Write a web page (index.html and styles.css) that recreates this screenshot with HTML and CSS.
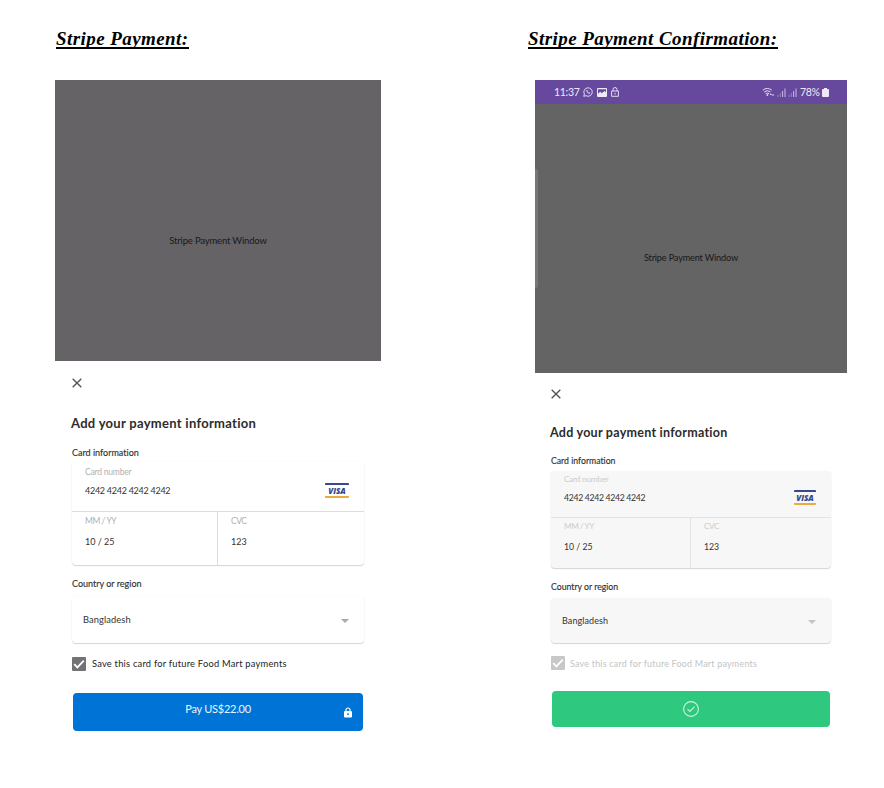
FILE: index.html
```html
<!DOCTYPE html>
<html lang="en">
<head>
<meta charset="utf-8">
<title>Stripe Payment</title>
<link rel="stylesheet" href="styles.css">
</head>
<body>
<main class="page">
  <section class="column pay">
    <h1><span>Stripe Payment:</span></h1>
    <div class="phone">
      <div class="backdrop"><span class="window">Stripe Payment Window</span></div>
      <div class="sheet">
        <div class="close"><svg viewBox="0 0 10 10"><path d="M.7.7l8.6 8.6M9.3.7L.7 9.3"/></svg></div>
        <h2><span>Add your payment information</span></h2>
        <div class="label card-label"><span class="t-ci">Card information</span></div>
        <div class="card">
          <div class="number">
            <div><div class="hint"><span class="t-cn">Card number</span></div><div class="value"><span class="t-num">4242 4242 4242 4242</span></div></div>
            <div class="visa"><span>VISA</span></div>
          </div>
          <div class="details">
            <div class="cell"><div class="hint"><span class="t-mm">MM / YY</span></div><div class="value"><span class="t-exp">10 / 25</span></div></div>
            <div class="cell"><div class="hint"><span class="t-cvc">CVC</span></div><div class="value"><span class="t-123">123</span></div></div>
          </div>
        </div>
        <div class="label region-label"><span class="t-cr">Country or region</span></div>
        <div class="select"><span class="t-bd">Bangladesh</span><i class="arrow"></i></div>
        <div class="save"><span class="box"><svg viewBox="0 0 14 14"><path d="M2.2 7.2l3.2 3.2 6.4-6.7"/></svg></span><span class="t-save">Save this card for future Food Mart payments</span></div>
        <div class="button"><span class="t-pay">Pay US$22.00</span>
          <svg class="lock" viewBox="0 0 8 11"><path class="shackle" d="M2 5V3a2 2 0 0 1 4 0v2"/><rect x="0" y="4" width="8" height="6.5" rx="1"/><circle cx="4" cy="7.2" r=".9"/></svg>
        </div>
      </div>
    </div>
  </section>

  <section class="column done">
    <h1><span>Stripe Payment Confirmation:</span></h1>
    <div class="phone">
      <div class="status">
        <span class="time">11:37</span>
        <svg class="st-wa" viewBox="0 0 10 10"><path d="M.7 9.3l.7-2.2A4.2 4.2 0 1 1 3 8.7z"/><path d="M3.3 3.1c-.3 2 1.8 4 3.7 3.7l.2-1-1.1-.5-.5.4-1.2-1.2.4-.5-.5-1z" class="solid"/></svg>
        <svg class="st-pic" viewBox="0 0 10 9"><path fill-rule="evenodd" d="M1 0h8q1 0 1 1v7q0 1-1 1H1Q0 9 0 8V1q0-1 1-1zM1 5.8l2.2-2 1.6 1.4L7.5 3 9 4.2V1.2H1z"/></svg>
        <svg class="st-lock" viewBox="0 0 8 10"><path d="M2 4V2.5a2 2 0 0 1 4 0V4M.6 4h6.8v5.3H.6zM4 5.8v1.8"/></svg>
        <svg class="st-wifi" viewBox="0 0 13 10"><path d="M.8 3.2a6.8 6.8 0 0 1 9 0M2.2 5a4.8 4.8 0 0 1 6.2 0M3.7 6.7a2.7 2.7 0 0 1 3.3 0"/><path class="solid" d="M4.2 8l1.2-1 1.1 1-1.1 1.2zM7.6 8l1.2-1.8L10 8zM9.8 7.6h2.4L11 9.3z"/></svg>
        <svg class="st-sig" viewBox="0 0 9 9"><path d="M1 9V7M3.3 9V5" class="weak"/><path d="M5.6 9V3M8 9V.5"/></svg>
        <svg class="st-sig" viewBox="0 0 9 9"><path d="M1 9V7M3.3 9V5" class="weak"/><path d="M5.6 9V3M8 9V.5"/></svg>
        <span class="percent">78%</span>
        <svg class="st-bat" viewBox="0 0 7 9"><path d="M2 0h3v1h1q1 0 1 1v6q0 1-1 1H1Q0 9 0 8V2q0-1 1-1h1z"/></svg>
      </div>
      <div class="backdrop"><i class="edge"></i><span class="window">Stripe Payment Window</span></div>
      <div class="sheet">
        <div class="close"><svg viewBox="0 0 10 10"><path d="M.7.7l8.6 8.6M9.3.7L.7 9.3"/></svg></div>
        <h2><span>Add your payment information</span></h2>
        <div class="label card-label"><span class="t-ci">Card information</span></div>
        <div class="card">
          <div class="number">
            <div><div class="hint"><span class="t-cn">Card number</span></div><div class="value"><span class="t-num">4242 4242 4242 4242</span></div></div>
            <div class="visa"><span>VISA</span></div>
          </div>
          <div class="details">
            <div class="cell"><div class="hint"><span class="t-mm">MM / YY</span></div><div class="value"><span class="t-exp">10 / 25</span></div></div>
            <div class="cell"><div class="hint"><span class="t-cvc">CVC</span></div><div class="value"><span class="t-123">123</span></div></div>
          </div>
        </div>
        <div class="label region-label"><span class="t-cr">Country or region</span></div>
        <div class="select"><span class="t-bd">Bangladesh</span><i class="arrow"></i></div>
        <div class="save"><span class="box"><svg viewBox="0 0 14 14"><path d="M2.2 7.2l3.2 3.2 6.4-6.7"/></svg></span><span class="t-save">Save this card for future Food Mart payments</span></div>
        <div class="button"><svg class="ok" viewBox="0 0 16 16"><circle cx="8" cy="8" r="7.4"/><path d="M4.5 8.2l2.4 2.3 4.6-4.8"/></svg></div>
      </div>
    </div>
  </section>
</main>
</body>
</html>
```
FILE: styles.css
```css
* { box-sizing: border-box; }
body { margin: 0; background: #fff; font-family: Lato, "Open Sans", sans-serif; color: #333; font-variant-ligatures: none; }
svg { display: block; fill: none; }
.page { display: flex; width: 884px; height: 788px; padding-left: 55px; overflow: hidden; }
.column { width: 326px; }
.done { width: 312px; margin-left: 154px; }

h1 { margin: 0; height: 80px; padding: 27px 0 0 1px; font: italic bold 19px/24px "Liberation Serif", serif; color: #000; white-space: nowrap; }
h1 span { display: inline-block; height: 22px; border-bottom: 2px solid #000; letter-spacing: .43px; }
.done h1 { margin-left: -8px; }

.backdrop { height: 281px; background: #666366; position: relative; text-align: center; color: #19181a; }
.window { display: block; padding-top: 154px; font-size: 9.5px; line-height: 14px; letter-spacing: -.18px; }
.done .backdrop { height: 269px; background: #646464; }
.done .window { padding-top: 147px; font-size: 9.2px; }
.edge { position: absolute; left: 0; top: 65px; width: 3px; height: 119px; background: #777; border-radius: 0 2px 2px 0; }

.status { height: 24px; background: #66499d; color: #eee9f6; display: flex; align-items: center; padding: 0 18px 0 19px; font-size: 10.5px; }
.time { width: 25px; letter-spacing: -.3px; }
.status svg { stroke: #e4dcf1; flex: none; }
.status .solid { fill: #e4dcf1; stroke: none; }
.status .weak { stroke: #a793cc; }
.st-wa { width: 10px; height: 10px; margin-left: 4px; }
.st-pic { width: 10px; height: 9px; margin-left: 4px; }
.status .st-pic, .status .st-bat { fill: #eee9f6; stroke: none; }
.st-lock { width: 8px; height: 10px; margin-left: 4px; }
.st-wifi { width: 13px; height: 10px; margin-left: auto; }
.st-sig { width: 9px; height: 9px; margin-left: 2px; opacity: .8; }
.percent { margin-left: 3px; width: 20px; letter-spacing: -.3px; }
.st-bat { width: 7px; height: 9px; margin-left: 2px; }

.sheet { padding: 17px 17px 0; white-space: nowrap; }
.close { height: 27px; }
.close svg { width: 10px; height: 10px; stroke: #555; stroke-width: 1.4; }
h2 { margin: 0 0 0 -1px; height: 36px; line-height: 36px; font-size: 13px; font-weight: 700; color: #2c2c2c; letter-spacing: .29px; }
.label { font-size: 9px; line-height: 12px; color: #333; -webkit-text-stroke: .15px; }
.card-label { height: 21px; padding-top: 6px; }
.card { height: 103px; border-radius: 4px; box-shadow: 0 1px 1px #d4d4d4, 0 0 2px #f2f2f2; background: #fff; }
.number { height: 50px; padding: 4px 15px 0 13px; display: flex; justify-content: space-between; border-bottom: 1px solid #ddd; }
.hint { font-size: 8.5px; line-height: 12px; color: #b0b0b0; letter-spacing: -.2px; }
.value { font-size: 9px; line-height: 12px; color: #333; }
.t-num { letter-spacing: -.27px; }
.t-mm, .t-cvc { letter-spacing: -.45px; }
.number .value { margin-top: 7px; }
.visa { width: 24px; height: 15px; margin-top: 17px; border-top: 2px solid #36498c; border-bottom: 2px solid #edaa3f; border-radius: 1px; font: italic 900 8px/11px "Open Sans", sans-serif; color: #304889; text-align: center; }
.details { display: grid; grid-template-columns: 1fr 1fr; height: 53px; }
.cell { padding: 3px 0 0 13px; }
.cell:first-child { border-right: 1px solid #ddd; }
.cell .value { margin-top: 9px; }
.region-label { height: 31px; padding-top: 13px; }
.select { height: 47px; padding: 0 15px 0 11px; display: flex; align-items: center; justify-content: space-between; border-radius: 4px; background: #fff; box-shadow: 0 1px 1px #d4d4d4, 0 0 2px #f2f2f2; font-size: 9.3px; }
.t-bd { letter-spacing: .1px; }
.arrow { border: 4px solid transparent; border-top-color: #aaa; border-bottom: 0; margin-top: 2px; }
.save { height: 41px; display: flex; align-items: center; color: #222; font-size: 9.3px; }
.t-save { letter-spacing: .23px; }
.box { width: 14px; height: 14px; margin-right: 6px; background: #737373; border-radius: 1px; }
.box path { stroke: #fff; stroke-width: 1.8; }
.button { height: 38px; margin: 9px 1px 0; position: relative; border-radius: 4px; background: #0074d6; color: #e8f4ff; text-align: center; font-size: 11px; line-height: 32px; }
.t-pay { letter-spacing: -.25px; }
.lock { position: absolute; right: 11px; top: 14px; width: 8px; height: 11px; fill: #fff; }
.lock .shackle { fill: none; stroke: #fff; stroke-width: 1.2; }
.lock circle { fill: #0074d6; }

.done .sheet { padding: 16px 16px 0; }
.done .close { height: 26px; }
.done h2 { font-size: 12.5px; height: 35px; letter-spacing: .26px; }
.done .card-label { height: 21px; padding-top: 5px; font-size: 8.7px; }
.done .card { height: 97px; background: #f7f7f7; }
.done .number { height: 47px; padding-top: 2px; border-color: #e2e2e2; }
.done .number .value { margin-top: 7px; }
.done .hint { color: #ccc; font-size: 8.2px; }
.done .value { font-size: 8.7px; }
.done .t-num { letter-spacing: -.32px; }
.done .visa { width: 22px; margin-top: 17px; }
.done .details { height: 50px; }
.done .cell { border-color: #e2e2e2; padding-top: 2px; }
.done .cell .value { margin-top: 9px; }
.done .region-label { height: 30px; padding-top: 13px; font-size: 8.7px; }
.done .select { height: 45px; background: #f7f7f7; font-size: 9px; }
.done .arrow { border-top-color: #c4c4c4; }
.done .save { color: #c4c4c4; height: 40px; font-size: 9px; }
.done .t-save { letter-spacing: .19px; }
.done .box { background: #c8c8c8; margin-right: 5px; }
.done .button { height: 36px; margin-top: 8px; background: #2ec97f; }
.ok { width: 16px; height: 16px; position: absolute; left: 131px; top: 10px; stroke: #c9f4df; stroke-width: 1.1; }
```
